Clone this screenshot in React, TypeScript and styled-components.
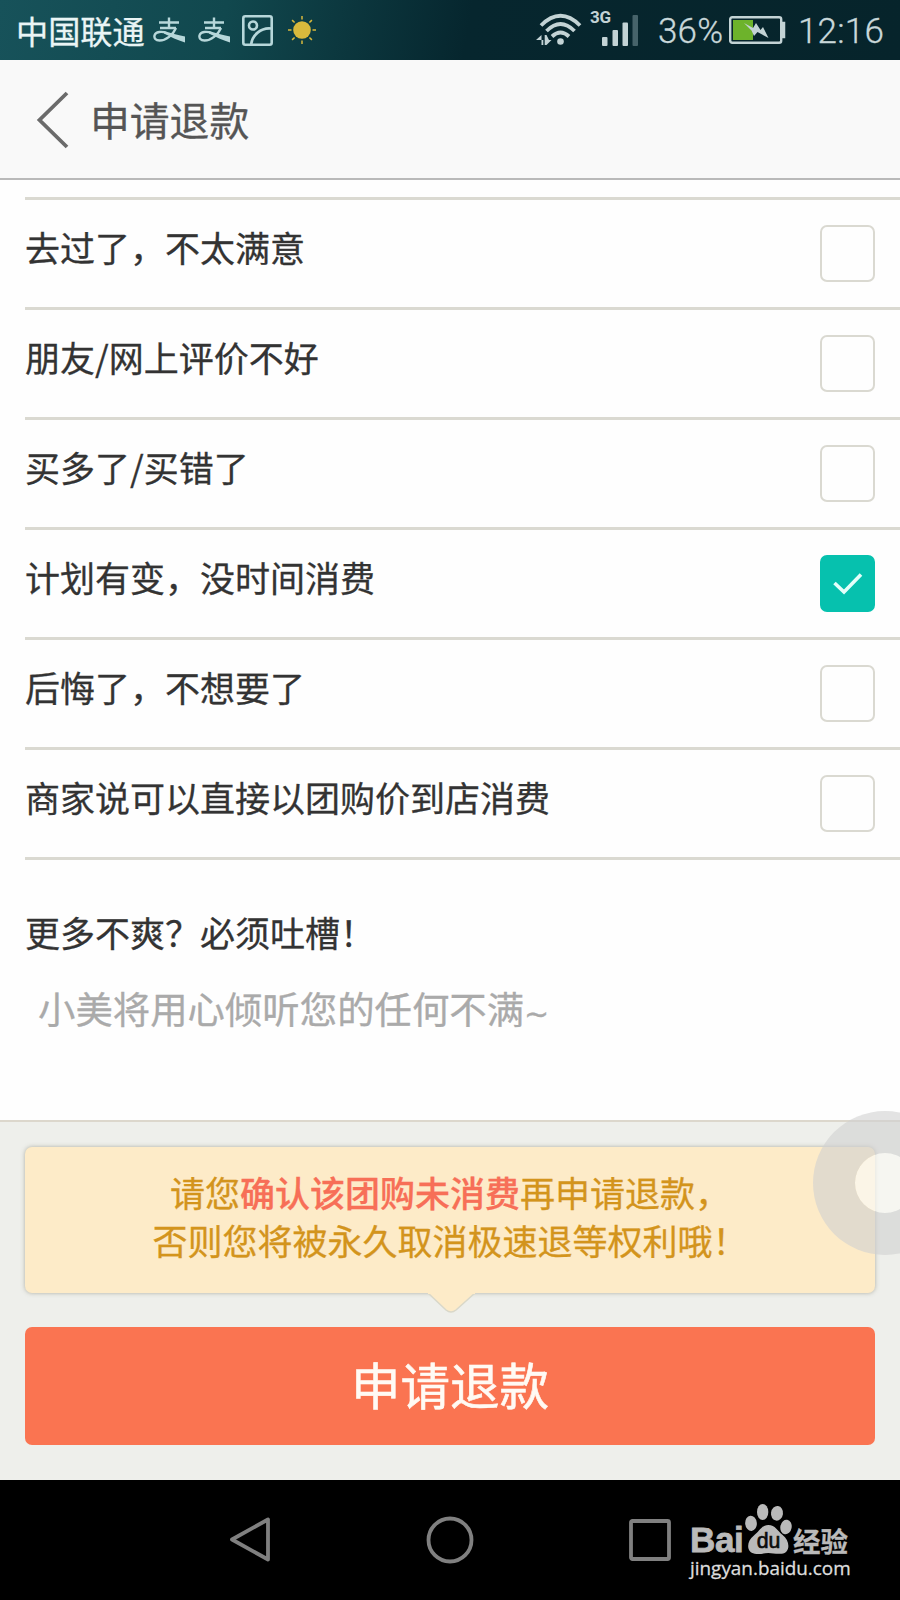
import React from "react";
import styled, { createGlobalStyle } from "styled-components";

const GlobalStyle = createGlobalStyle`
  * { box-sizing: border-box; }
  body {
    margin: 0;
    background: #fefefe;
    font-family: "Noto Sans CJK SC", sans-serif;
    -webkit-text-stroke: 0.3px currentColor;
  }
`;

const Screen = styled.div`
  position: relative;
  width: 900px;
  height: 1600px;
  display: flex;
  flex-direction: column;
  overflow: hidden;
  background: #fefefe;
`;

const StatusBar = styled.header`
  height: 60px;
  flex: none;
  display: flex;
  align-items: center;
  justify-content: space-between;
  padding: 0 15px 0 16px;
  color: #c3d3d5;
  background: linear-gradient(100deg, #17525a 0%, #11484e 25%, #06262e 52%, #06242b 100%);
`;

const StatusGroup = styled.div`
  display: flex;
  align-items: center;
  height: 60px;
`;

const Carrier = styled.span`
  font-size: 32.2px;
  line-height: 56px;
  color: #eaf5f5;
  width: 136px;
  white-space: nowrap;
`;

const StatusText = styled.span<{ $width: number; $gap?: number }>`
  font-family: Roboto, sans-serif;
  font-weight: 300;
  font-size: 35px;
  line-height: 60px;
  padding-top: 4px;
  letter-spacing: 0.2px;
  color: #c9d8da;
  width: ${(p) => p.$width}px;
  margin-left: ${(p) => p.$gap ?? 0}px;
  white-space: nowrap;
`;

const Glyph = styled.svg<{ $gap?: number }>`
  display: block;
  flex: none;
  margin-left: ${(p) => p.$gap ?? 0}px;
`;

const TitleBar = styled.div`
  height: 120px;
  flex: none;
  display: flex;
  align-items: center;
  padding-left: 36px;
  background: #f9f9f9;
  border-bottom: 2px solid #b9b9b9;
`;

const Title = styled.h1`
  margin: 0 0 0 20px;
  font-size: 39.8px;
  font-weight: 400;
  line-height: 60px;
  color: #555;
`;

const ReasonList = styled.ul`
  list-style: none;
  flex: none;
  margin: 17px 0 0 25px;
  padding: 0;
  border-top: 3px solid #dad9d1;
`;

const Reason = styled.li`
  height: 110px;
  display: flex;
  align-items: center;
  justify-content: space-between;
  padding-right: 25px;
  border-bottom: 3px solid #dad9d1;
`;

const ReasonText = styled.span`
  font-size: 35px;
  line-height: 50px;
  padding-bottom: 13px;
  color: #333;
`;

const CheckBox = styled.span<{ $checked: boolean }>`
  width: 55px;
  height: 57px;
  display: flex;
  align-items: center;
  justify-content: center;
  border-radius: 7px;
  border: 2.5px solid ${(p) => (p.$checked ? "#06c1ae" : "#dad9d1")};
  background: ${(p) => (p.$checked ? "#06c1ae" : "#fefefe")};
`;

const Comment = styled.section`
  height: 260px;
  flex: none;
  padding: 47px 25px 0;
`;

const CommentLabel = styled.div`
  font-size: 35px;
  line-height: 50px;
  color: #333;
`;

const Placeholder = styled.div`
  margin-top: 25px;
  padding-left: 13px;
  font-size: 37.4px;
  line-height: 52px;
  color: #aaa;
`;

const Tilde = styled.span`
  font-family: "DejaVu Sans", sans-serif;
  font-size: 30px;
  line-height: 1;
`;

const Footer = styled.section`
  height: 360px;
  flex: none;
  padding: 25px 25px 0;
  border-top: 2px solid #dcd7cc;
  background: #eeefeb;
`;

const Notice = styled.div`
  position: relative;
  height: 146px;
  padding-top: 21px;
  border-radius: 7px;
  background: #fdebc8;
  box-shadow: 0 0 4px rgba(110, 110, 90, 0.5);
  text-align: center;
  font-size: 35px;
  line-height: 48px;
  color: #d3941c;
`;

const Strong = styled.span`
  color: #f76f57;
  font-weight: 500;
`;

const Tail = styled.svg`
  position: absolute;
  left: 400px;
  top: 145px;
`;

const Submit = styled.button`
  display: block;
  width: 850px;
  height: 118px;
  margin: 34px 0 0;
  padding: 0 0 4px;
  border: 0;
  border-radius: 7px;
  background: #fa7451;
  color: #fffaf4;
  font-family: inherit;
  font-size: 49.5px;
  line-height: 70px;
  -webkit-text-stroke: 0.6px currentColor;
`;

const NavBar = styled.nav`
  position: relative;
  height: 120px;
  flex: none;
  display: flex;
  align-items: center;
  padding-left: 228px;
  background: #000;
`;

const Watermark = styled.div`
  position: absolute;
  left: 690px;
  top: 20px;
  width: 165px;
`;

const Brand = styled.div`
  display: flex;
  height: 60px;
  align-items: flex-start;
  color: #bababa;
`;

const BrandLatin = styled.span`
  width: 54px;
  font-family: "Liberation Sans", sans-serif;
  font-weight: 700;
  font-size: 35px;
  line-height: 40px;
  letter-spacing: -0.4px;
  padding-top: 20px;
  -webkit-text-stroke: 0.8px currentColor;
`;

const BrandChinese = styled.span`
  font-weight: 700;
  font-size: 27.5px;
  line-height: 40px;
  padding-top: 20px;
  white-space: nowrap;
`;

const PawSlot = styled.span`
  padding-top: 3px;
  width: 49px;
`;

const Site = styled.div`
  margin-top: -4px;
  font-family: "Open Sans", sans-serif;
  font-size: 18.9px;
  line-height: 24px;
  color: #ddd;
  white-space: nowrap;
`;

const FloatingBall = styled.div`
  position: absolute;
  left: 813px;
  top: 1111px;
  width: 144px;
  height: 144px;
  border-radius: 50%;
  border: 42px solid rgba(208, 208, 208, 0.6);
  background: rgba(250, 249, 243, 0.7);
  background-clip: padding-box;
`;

const reasons = [
  { text: "去过了，不太满意", checked: false },
  { text: "朋友/网上评价不好", checked: false },
  { text: "买多了/买错了", checked: false },
  { text: "计划有变，没时间消费", checked: true },
  { text: "后悔了，不想要了", checked: false },
  { text: "商家说可以直接以团购价到店消费", checked: false },
];

const PayIcon = ({ gap }: { gap: number }) => (
  <Glyph $gap={gap} width="33" height="26" viewBox="0 0 33 26" fill="none" stroke="#b7d7da">
    <path d="M6 5.500H26M16 0.500V11M7 11H23" strokeWidth="2.400" />
    <path d="M23 11C20 18 13 23.500 6.500 23.500C2.500 23.500 1 21 1.500 18.500C2.500 14.500 9 14 14 16.300" strokeWidth="2.400" />
    <path d="M11 14C18 16 24 18 32 19.500V25.500C24 23 18 20 11 16.500Z" fill="#b7d7da" stroke="none" />
  </Glyph>
);

const PictureIcon = () => (
  <Glyph $gap={11} width="31" height="31" viewBox="0 0 31 31" fill="none" stroke="#b7d7da" strokeWidth="2.600">
    <rect x="1.300" y="1.300" width="28.400" height="28.400" rx="2" />
    <circle cx="11" cy="10.500" r="4" />
    <path d="M9 30C10 20 19 12.500 29 13.500" />
  </Glyph>
);

const SunIcon = () => (
  <Glyph $gap={14} width="30" height="30" viewBox="-15 -15 30 30">
    <circle r="8.800" fill="#d9b93c" />
    {[0, 45, 90, 135, 180, 225, 270, 315].map((a) => (
      <path key={a} d="M0 -10.500V-14" stroke="#d9b93c" strokeWidth="1.500" transform={`rotate(${a})`} />
    ))}
  </Glyph>
);

const WifiIcon = () => (
  <Glyph width="46" height="34" viewBox="0 0 46 34" fill="none" stroke="#c3d3d5" strokeWidth="3.800">
    <path d="M5 12.500Q24.500 -7 44 12.500" />
    <path d="M10.500 18Q24.500 4 38.500 18" />
    <path d="M16 23.500Q24.500 15.500 33 23.500" />
    <circle cx="24.500" cy="28.500" r="3.300" fill="#c3d3d5" stroke="none" />
    <path d="M0 27L5.500 22V32H7.300V27ZM8.700 22V32H10.500L15.500 27H13L10.500 22Z" fill="#c3d3d5" stroke="none" />
  </Glyph>
);

const SignalText = styled.text`
  font-family: Roboto, sans-serif;
  font-weight: 700;
  font-size: 17px;
`;

const SignalIcon = () => (
  <Glyph $gap={8} width="50" height="52" viewBox="0 -5 50 52" fill="#c3d3d5">
    <SignalText x="0" y="13.500" textLength="21">3G</SignalText>
    <rect x="12" y="28" width="5.500" height="9" rx="1" />
    <rect x="22.500" y="21" width="5.500" height="16" rx="1" />
    <rect x="32.500" y="13.500" width="5.500" height="23.500" rx="1" />
    <rect x="42.500" y="6" width="5.500" height="31" rx="1" fill="#46636a" />
  </Glyph>
);

const BatteryIcon = () => (
  <Glyph $gap={1} width="57" height="28" viewBox="0 0 57 28">
    <rect x="1.200" y="1.200" width="51" height="25.600" rx="2" fill="none" stroke="#c3d3d5" strokeWidth="2.400" />
    <path d="M53 6.500H55.500V21.500H53Z" stroke="#c3d3d5" strokeWidth="1.500" fill="#c3d3d5" />
    <rect x="4" y="4" width="20" height="20" fill="#6db32b" />
    <path d="M15 7L24 12L27 7L31.500 14L34 11L39.500 22L28.500 16L25 20L22.500 14.500Z" fill="#c3d3d5" />
  </Glyph>
);

const PawText = styled.text`
  font-family: "Liberation Sans", sans-serif;
  font-weight: 400;
  font-size: 66px;
  fill: #0b0b0b;
  stroke: #0b0b0b;
  stroke-width: 2px;
`;

const Paw = () => (
  <Glyph width="49" height="54" viewBox="433 99 147 162" fill="#bababa">
    <ellipse cx="454" cy="160" rx="17.500" ry="23" transform="rotate(-5 454 160)" />
    <ellipse cx="489" cy="126" rx="17" ry="24" />
    <ellipse cx="532" cy="130" rx="18" ry="22" transform="rotate(8 532 130)" />
    <ellipse cx="559" cy="171" rx="17" ry="22" transform="rotate(10 559 171)" />
    <path d="M506 165C527 165 533 183 548 194C573 213 572 249 546 251C530 253 519 249 506 249C493 249 481 254 465 251C439 247 440 213 462 197C480 184 485 165 506 165Z" />
    <PawText x="471" y="234" textLength="71" lengthAdjust="spacingAndGlyphs">du</PawText>
  </Glyph>
);

export default function App() {
  return (
    <Screen>
      <GlobalStyle />
      <StatusBar>
        <StatusGroup>
          <Carrier>中国联通</Carrier>
          <PayIcon gap={1} />
          <PayIcon gap={12} />
          <PictureIcon />
          <SunIcon />
        </StatusGroup>
        <StatusGroup>
          <WifiIcon />
          <SignalIcon />
          <StatusText $width={70} $gap={18}>36%</StatusText>
          <BatteryIcon />
          <StatusText $width={87} $gap={12}>12:16</StatusText>
        </StatusGroup>
      </StatusBar>
      <TitleBar>
        <Glyph width="34" height="60" viewBox="0 -2 34 60" fill="none" stroke="#6b6b6b" strokeWidth="3.800">
          <path d="M31 2L3.500 29L31 56" />
        </Glyph>
        <Title>申请退款</Title>
      </TitleBar>
      <ReasonList>
        {reasons.map((r) => (
          <Reason key={r.text}>
            <ReasonText>{r.text}</ReasonText>
            <CheckBox $checked={r.checked}>
              {r.checked && (
                <Glyph width="30" height="22" viewBox="0.500 0.500 30 22" fill="none" stroke="#e4fffa" strokeWidth="3.600">
                  <path d="M2 10.500L11.500 19.500L28.500 2" />
                </Glyph>
              )}
            </CheckBox>
          </Reason>
        ))}
      </ReasonList>
      <Comment>
        <CommentLabel>更多不爽？必须吐槽！</CommentLabel>
        <Placeholder>小美将用心倾听您的任何不满<Tilde>~</Tilde></Placeholder>
      </Comment>
      <Footer>
        <Notice>
          请您<Strong>确认该团购未消费</Strong>再申请退款，
          <br />
          否则您将被永久取消极速退等权利哦！
          <Tail width="54" height="24" viewBox="0 0 54 24">
            <path d="M3 1L21 18Q26 22 31 18L50 1" fill="#fdebc8" stroke="#d9d8c9" strokeWidth="1.500" />
            <path d="M3 0H50V2H3Z" fill="#fdebc8" />
          </Tail>
        </Notice>
        <Submit>申请退款</Submit>
      </Footer>
      <NavBar>
        <Glyph width="44" height="48" viewBox="0 0 44 48" fill="none" stroke="#808080" strokeWidth="3.800" strokeLinejoin="round">
          <path d="M40 3.500V43.500L4 23.500Z" />
        </Glyph>
        <Glyph $gap={154} width="48" height="48" viewBox="0 0 48 48" fill="none" stroke="#808080" strokeWidth="3.800">
          <circle cx="24" cy="24" r="21.500" />
        </Glyph>
        <Glyph $gap={154} width="44" height="44" viewBox="0 0 44 44" fill="none" stroke="#808080" strokeWidth="3.800">
          <rect x="3" y="3" width="38" height="38" rx="1.500" />
        </Glyph>
        <Watermark>
          <Brand>
            <BrandLatin>Bai</BrandLatin>
            <PawSlot>
              <Paw />
            </PawSlot>
            <BrandChinese>经验</BrandChinese>
          </Brand>
          <Site>jingyan.baidu.com</Site>
        </Watermark>
      </NavBar>
      <FloatingBall />
    </Screen>
  );
}
